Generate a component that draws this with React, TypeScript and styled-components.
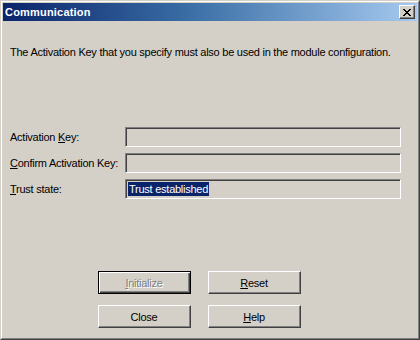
import React from 'react';
import styled, { createGlobalStyle } from 'styled-components';

const GlobalStyle = createGlobalStyle`
  html, body {
    margin: 0;
    padding: 0;
    background: #d4d0c8;
  }
  body {
    font-family: "Liberation Sans", Arial, sans-serif;
    font-size: 11px;
    letter-spacing: -0.25px;
  }
`;

const Window = styled.div`
  box-sizing: border-box;
  width: 420px;
  height: 340px;
  background: #d4d0c8;
  border-top: 1px solid #d4d0c8;
  border-left: 1px solid #d4d0c8;
  border-right: 1px solid #404040;
  border-bottom: 1px solid #404040;
  display: flex;
  flex-direction: column;
`;

const Frame = styled.div`
  flex: 1;
  display: flex;
  flex-direction: column;
  padding: 1px;
  border-top: 1px solid #ffffff;
  border-left: 1px solid #ffffff;
  border-right: 1px solid #808080;
  border-bottom: 1px solid #808080;
`;

const TitleBar = styled.div`
  height: 18px;
  display: flex;
  align-items: center;
  justify-content: space-between;
  padding: 0 2px 0 2px;
  background: linear-gradient(to right, #0a246a 0%, #3a6ea5 45%, #a6caf0 100%);
`;

const Title = styled.span`
  color: #ffffff;
  font-weight: bold;
  font-size: 11px;
  letter-spacing: 0.2px;
`;

const CloseBox = styled.button`
  box-sizing: border-box;
  width: 16px;
  height: 14px;
  padding: 0;
  background: #d4d0c8;
  border-style: solid;
  border-width: 1px;
  border-color: #ffffff #404040 #404040 #ffffff;
  box-shadow: inset -1px -1px 0 #808080;
  display: flex;
  align-items: center;
  justify-content: center;
`;

const Body = styled.div`
  flex: 1;
  display: flex;
  flex-direction: column;
  padding: 25px 7px 0 7px;
`;

const Description = styled.p`
  margin: 0;
  line-height: 13px;
  color: #000000;
  white-space: nowrap;
`;

const Form = styled.div`
  margin-top: 68px;
  display: grid;
  grid-template-columns: 115px 276px;
  row-gap: 6px;
  align-items: center;
`;

const Label = styled.label`
  color: #000000;
  line-height: 13px;
  white-space: nowrap;
`;

const Field = styled.div`
  box-sizing: border-box;
  height: 20px;
  background: #d4d0c8;
  border-style: solid;
  border-width: 1px;
  border-color: #808080 #ffffff #ffffff #808080;
  box-shadow: inset 1px 1px 0 #404040, inset -1px -1px 0 #d4d0c8;
  display: flex;
  align-items: center;
  padding-left: 2px;
`;

const Selected = styled.span`
  background: #0a246a;
  color: #ffffff;
  line-height: 14px;
  padding: 0 1px;
`;

const Buttons = styled.div`
  margin-top: 72px;
  align-self: center;
  display: grid;
  grid-template-columns: 93px 93px;
  column-gap: 17px;
  row-gap: 11px;
  margin-left: -22px;
`;

const Button = styled.button<{ $default?: boolean }>`
  box-sizing: border-box;
  height: 23px;
  padding: 0;
  font-family: "Liberation Sans", Arial, sans-serif;
  font-size: 11px;
  letter-spacing: -0.25px;
  color: #000000;
  background: #d4d0c8;
  border-style: solid;
  border-width: 1px;
  border-color: ${({ $default }) =>
    $default ? '#000000' : '#ffffff #404040 #404040 #ffffff'};
  box-shadow: ${({ $default }) =>
    $default
      ? 'inset 1px 1px 0 #ffffff, inset -1px -1px 0 #404040, inset -2px -2px 0 #808080'
      : 'inset -1px -1px 0 #808080'};
  &:disabled {
    color: #808080;
    text-shadow: 1px 1px 0 #ffffff;
  }
`;

const Key = styled.span`
  text-decoration: underline;
`;

export default function App() {
  return (
    <>
      <GlobalStyle />
      <Window>
        <Frame>
          <TitleBar>
            <Title>Communication</Title>
            <CloseBox aria-label="Close">
              <svg width="8" height="7" viewBox="0 0 8 7">
                <path d="M0 0h2v1h1v1h2V1h1V0h2v1H7v1H6v1H5v1h1v1h1v1h1v1H6V6H5V5H3v1H2v1H0V6h1V5h1V4h1V3H2V2H1V1H0z" fill="#000" />
              </svg>
            </CloseBox>
          </TitleBar>
          <Body>
            <Description>
              The Activation Key that you specify must also be used in the module configuration.
            </Description>
            <Form>
              <Label>Activation <Key>K</Key>ey:</Label>
              <Field />
              <Label><Key>C</Key>onfirm Activation Key:</Label>
              <Field />
              <Label><Key>T</Key>rust state:</Label>
              <Field>
                <Selected>Trust established</Selected>
              </Field>
            </Form>
            <Buttons>
              <Button $default disabled><Key>I</Key>nitialize</Button>
              <Button><Key>R</Key>eset</Button>
              <Button>Close</Button>
              <Button><Key>H</Key>elp</Button>
            </Buttons>
          </Body>
        </Frame>
      </Window>
    </>
  );
}
